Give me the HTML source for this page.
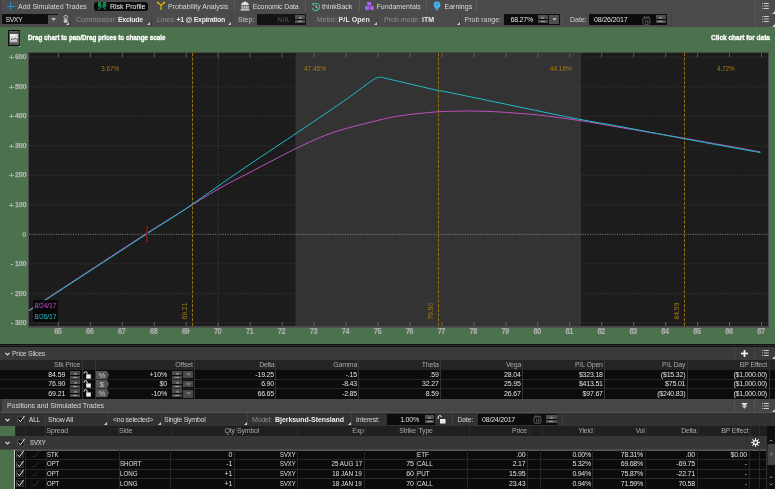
<!DOCTYPE html><html><head><meta charset="utf-8"><style>
html,body{margin:0;padding:0;width:775px;height:489px;overflow:hidden;background:#4b4b4b;}
body{position:relative;font-family:"Liberation Sans",sans-serif;}
div,span,svg{position:absolute;}
.t{white-space:nowrap;line-height:12px;height:12px;}
svg text{font-family:"Liberation Sans",sans-serif;}
</style></head><body><div id="root" style="left:0;top:0;width:775px;height:489px;will-change:transform">
<div style="left:0px;top:0px;width:775px;height:26.5px;background:#4b4b4b;"></div>
<div style="left:0px;top:0px;width:1px;height:26.5px;background:#404040;"></div>
<div style="left:1px;top:12px;width:774px;height:1px;background:#494949;"></div>
<div style="left:91.5px;top:0px;width:1.0px;height:12px;background:#5a5a5a;"></div>
<div style="left:234px;top:0px;width:1px;height:12px;background:#5a5a5a;"></div>
<div style="left:305px;top:0px;width:1px;height:12px;background:#5a5a5a;"></div>
<div style="left:359px;top:0px;width:1px;height:12px;background:#5a5a5a;"></div>
<div style="left:425.8px;top:0px;width:1.0px;height:12px;background:#5a5a5a;"></div>
<div style="left:476px;top:0px;width:1px;height:12px;background:#5a5a5a;"></div>
<div style="left:754.5px;top:0px;width:1.0px;height:26.5px;background:#575757;"></div>
<div style="left:6.8px;top:5.6px;width:8.0px;height:1.1000000000000005px;background:#2a8cc0;"></div>
<div style="left:10.2px;top:2.1px;width:1.1000000000000014px;height:8.1px;background:#2a8cc0;"></div>
<span class="t" style="left:18px;top:0.5999999999999996px;font-size:7px;color:#d8d8d8;font-weight:400;letter-spacing:0px;">Add Simulated Trades</span>
<div style="left:94px;top:2px;width:54px;height:8.5px;background:#0c0c0c;border-radius:2.5px"></div>
<svg style="left:96px;top:1px" width="12" height="10" viewBox="96 1 12 10"><rect x="98" y="2" width="3.1" height="4.9" fill="#0f8a48"/><rect x="103" y="2" width="3.2" height="4.9" fill="#0f8a48"/><path d="M100.6 6.6 L99.4 8.6 L98.3 9.5 M103.4 6.6 L104.6 8.6 L105.7 9.5" stroke="#0f8a48" stroke-width="1.1" fill="none"/><path d="M101.6 4.5 L101.8 6.6 L100.9 8.2 M102.6 4.5 L102.3 6.6 L103.1 8.2" stroke="#176060" stroke-width="0.8" fill="none"/></svg>
<span class="t" style="left:110px;top:0.5999999999999996px;font-size:7px;color:#f0f0f0;font-weight:400;letter-spacing:0px;">Risk Profile</span>
<svg style="left:155.5px;top:0px" width="10" height="11" viewBox="0 0 10 11"><path d="M1.8 2.6 L5 5.2 L8.2 2.6 M5 5.2 L5 10" stroke="#e0b800" stroke-width="1.2" fill="none"/><circle cx="1.8" cy="2.6" r="1" fill="#e0b800"/><circle cx="8.2" cy="2.6" r="1" fill="#e0b800"/></svg>
<span class="t" style="left:168px;top:0.5999999999999996px;font-size:7px;color:#d8d8d8;font-weight:400;letter-spacing:0px;">Probability Analysis</span>
<svg style="left:240px;top:0.5px" width="10" height="10" viewBox="0 0 10 10"><path d="M1.2 4 Q1.2 1 5 1 Q8.8 1 8.8 4 Z" fill="#e0e0e0"/><rect x="4.5" y="0" width="1" height="1.2" fill="#e0e0e0"/><rect x="1.5" y="4.6" width="1.2" height="3.2" fill="#e0e0e0"/><rect x="3.6" y="4.6" width="1.2" height="3.2" fill="#e0e0e0"/><rect x="5.6" y="4.6" width="1.2" height="3.2" fill="#e0e0e0"/><rect x="7.4" y="4.6" width="1.2" height="3.2" fill="#e0e0e0"/><rect x="0.6" y="8.2" width="8.8" height="1.3" fill="#e0e0e0"/></svg>
<span class="t" style="left:252.7px;top:0.5999999999999996px;font-size:7px;color:#d8d8d8;font-weight:400;letter-spacing:-0.12px;">Economic Data</span>
<svg style="left:310.5px;top:1.5px" width="10" height="10" viewBox="0 0 10 10"><path d="M1.3 5.8 A3.7 3.7 0 1 0 2.2 2.4" stroke="#3cc080" stroke-width="1.2" fill="none"/><path d="M0.2 1.6 L3.2 1.2 L2.6 4 Z" fill="#3cc080"/><path d="M5 2.8 L5 5.2 L6.6 6.2" stroke="#d0d0d0" stroke-width="0.9" fill="none"/></svg>
<span class="t" style="left:322px;top:0.5999999999999996px;font-size:7px;color:#d8d8d8;font-weight:400;letter-spacing:0px;">thinkBack</span>
<svg style="left:365px;top:2px" width="9" height="8" viewBox="0 0 9 8"><rect x="2.3" y="0" width="4" height="3.6" fill="#b060f0"/><rect x="0" y="4.2" width="4" height="3.6" fill="#b060f0"/><rect x="4.8" y="4.2" width="4" height="3.6" fill="#b060f0"/></svg>
<span class="t" style="left:376.5px;top:0.5999999999999996px;font-size:7px;color:#d8d8d8;font-weight:400;letter-spacing:0px;">Fundamentals</span>
<svg style="left:433px;top:0.8px" width="8" height="10" viewBox="0 0 8 10"><circle cx="4" cy="3.8" r="3.4" fill="#48b4ec"/><path d="M2.2 3.2 Q4 1.6 5.8 3.6 M2.4 4.6 L5.4 2.6" stroke="#2a7fb0" stroke-width="0.6" fill="none"/><rect x="2.7" y="6.8" width="2.6" height="1.6" fill="#48b4ec"/><rect x="3.1" y="8.6" width="1.8" height="0.9" fill="#48b4ec"/></svg>
<span class="t" style="left:444.5px;top:0.5999999999999996px;font-size:7px;color:#d8d8d8;font-weight:400;letter-spacing:0px;">Earnings</span>
<svg style="left:761.5px;top:3.2px" width="7" height="6" viewBox="0 0 7 6"><rect x="0" y="0" width="1" height="0.9" fill="#bbb"/><rect x="1.8" y="0" width="5" height="0.9" fill="#ddd"/><rect x="0" y="2.5" width="1" height="0.9" fill="#bbb"/><rect x="1.8" y="2.5" width="5" height="0.9" fill="#ccc"/><rect x="0" y="5" width="1" height="0.9" fill="#bbb"/><rect x="1.8" y="5" width="5" height="0.9" fill="#ddd"/></svg>
<svg style="left:761.5px;top:16.2px" width="7" height="6" viewBox="0 0 7 6"><rect x="0" y="0" width="1" height="0.9" fill="#bbb"/><rect x="1.8" y="0" width="5" height="0.9" fill="#ddd"/><rect x="0" y="2.5" width="1" height="0.9" fill="#bbb"/><rect x="1.8" y="2.5" width="5" height="0.9" fill="#ccc"/><rect x="0" y="5" width="1" height="0.9" fill="#bbb"/><rect x="1.8" y="5" width="5" height="0.9" fill="#ddd"/></svg>
<svg style="left:771.5px;top:10.5px" width="3" height="3" viewBox="0 0 3 3"><path d="M3 0 L3 3 L0 3 Z" fill="#ccc"/></svg>
<svg style="left:771.5px;top:23.5px" width="3" height="3" viewBox="0 0 3 3"><path d="M3 0 L3 3 L0 3 Z" fill="#ccc"/></svg>
<div style="left:2px;top:14.4px;width:56px;height:10.1px;background:#0f0f0f;"></div>
<span class="t" style="left:5.5px;top:13.5px;font-size:7px;color:#e0e0e0;font-weight:400;letter-spacing:-0.5px;">SVXY</span>
<div style="left:48px;top:15px;width:9.5px;height:9px;background:#4f4f4f;"></div>
<svg style="left:50.5px;top:18px" width="5" height="3" viewBox="0 0 5 3"><path d="M0 0 L5 0 L2.5 3 Z" fill="#bbb"/></svg>
<svg style="left:62.5px;top:14.5px" width="6" height="9" viewBox="0 0 6 9"><rect x="1" y="0.6" width="3.4" height="3.2" rx="1.2" stroke="#c8c8c8" stroke-width="1" fill="none"/><rect x="0.8" y="4.6" width="3.8" height="3.2" rx="1" fill="#c8c8c8"/><rect x="2.2" y="3.5" width="1" height="1.5" fill="#c8c8c8"/></svg>
<svg style="left:66px;top:22px" width="3" height="3" viewBox="0 0 3 3"><path d="M3 0 L3 3 L0 3 Z" fill="#ccc"/></svg>
<div style="left:70px;top:13px;width:1px;height:13.5px;background:#454545;"></div>
<span class="t" style="left:76px;top:13.600000000000001px;font-size:7px;color:#8f8f8f;font-weight:400;letter-spacing:0px;">Commission:</span>
<span class="t" style="left:118px;top:13.600000000000001px;font-size:7px;color:#e8e8e8;font-weight:700;letter-spacing:-0.3px;">Exclude</span>
<svg style="left:146.5px;top:22px" width="3" height="3" viewBox="0 0 3 3"><path d="M3 0 L3 3 L0 3 Z" fill="#ccc"/></svg>
<div style="left:150.8px;top:13px;width:1.0px;height:13.5px;background:#434343;"></div>
<span class="t" style="left:157px;top:13.600000000000001px;font-size:7px;color:#8f8f8f;font-weight:400;letter-spacing:0px;">Lines:</span>
<span class="t" style="left:176.5px;top:13.600000000000001px;font-size:7px;color:#e8e8e8;font-weight:700;letter-spacing:-0.3px;">+1 @ Expiration</span>
<svg style="left:228px;top:22px" width="3" height="3" viewBox="0 0 3 3"><path d="M3 0 L3 3 L0 3 Z" fill="#ccc"/></svg>
<div style="left:231.3px;top:13px;width:1.0px;height:13.5px;background:#434343;"></div>
<span class="t" style="left:238px;top:13.600000000000001px;font-size:7px;color:#c8c8c8;font-weight:400;letter-spacing:0px;">Step:</span>
<div style="left:256.5px;top:14px;width:49.5px;height:10.5px;background:#141414;"></div>
<span class="t" style="right:486px;top:13.600000000000001px;font-size:7px;color:#555;font-weight:400;letter-spacing:0px;">N/A</span>
<div style="left:295px;top:15px;width:10px;height:4px;background:#505050;"></div>
<div style="left:295px;top:20px;width:10px;height:3px;background:#505050;"></div>
<svg style="left:297.5px;top:15.6px" width="5" height="3" viewBox="0 0 5 3"><path d="M0.5 2.6 L2.5 0.4 L4.5 2.6 Z" fill="#9a9a9a"/></svg>
<div style="left:297.8px;top:21px;width:4.399999999999977px;height:1px;background:#9a9a9a;"></div>
<div style="left:310.4px;top:13px;width:1.0px;height:13.5px;background:#434343;"></div>
<span class="t" style="left:316.7px;top:13.600000000000001px;font-size:7px;color:#8f8f8f;font-weight:400;letter-spacing:0px;">Metric:</span>
<span class="t" style="right:405px;top:13.600000000000001px;font-size:7px;color:#e8e8e8;font-weight:700;letter-spacing:0.1px;">P/L Open</span>
<svg style="left:374px;top:22px" width="3" height="3" viewBox="0 0 3 3"><path d="M3 0 L3 3 L0 3 Z" fill="#ccc"/></svg>
<div style="left:377.4px;top:13px;width:1.0px;height:13.5px;background:#434343;"></div>
<span class="t" style="left:384px;top:13.600000000000001px;font-size:7px;color:#8f8f8f;font-weight:400;letter-spacing:0px;">Prob mode:</span>
<span class="t" style="right:341px;top:13.600000000000001px;font-size:7px;color:#e8e8e8;font-weight:700;letter-spacing:0px;">ITM</span>
<svg style="left:457px;top:22px" width="3" height="3" viewBox="0 0 3 3"><path d="M3 0 L3 3 L0 3 Z" fill="#ccc"/></svg>
<div style="left:459.7px;top:13px;width:1.0px;height:13.5px;background:#434343;"></div>
<span class="t" style="left:464.5px;top:13.600000000000001px;font-size:7px;color:#d0d0d0;font-weight:400;letter-spacing:0px;">Prob range:</span>
<div style="left:504px;top:14px;width:56px;height:10.5px;background:#0c0c0c;"></div>
<span class="t" style="right:242px;top:13.600000000000001px;font-size:7px;color:#e0e0e0;font-weight:400;letter-spacing:-0.2px;">68.27%</span>
<div style="left:538px;top:15px;width:9.600000000000023px;height:4px;background:#505050;"></div>
<div style="left:538px;top:20px;width:9.600000000000023px;height:3px;background:#505050;"></div>
<svg style="left:540.3px;top:15.6px" width="5" height="3" viewBox="0 0 5 3"><path d="M0.5 2.6 L2.5 0.4 L4.5 2.6 Z" fill="#9a9a9a"/></svg>
<div style="left:540.5999999999999px;top:21px;width:4.400000000000091px;height:1px;background:#9a9a9a;"></div>
<div style="left:548.6px;top:15px;width:10.399999999999977px;height:9px;background:#4e4e4e;"></div>
<svg style="left:551.8px;top:18.3px" width="5" height="3" viewBox="0 0 5 3"><path d="M0.3 0.2 L4.7 0.2 L2.5 2.6 Z" fill="#c8c8c8"/></svg>
<div style="left:565px;top:13px;width:1px;height:13.5px;background:#434343;"></div>
<span class="t" style="left:570px;top:13.600000000000001px;font-size:7px;color:#d0d0d0;font-weight:400;letter-spacing:0px;">Date:</span>
<div style="left:589px;top:14px;width:77.5px;height:10.5px;background:#0c0c0c;"></div>
<span class="t" style="left:594px;top:13.600000000000001px;font-size:7px;color:#e0e0e0;font-weight:400;letter-spacing:-0.15px;">08/26/2017</span>
<svg style="left:642px;top:15.5px" width="9" height="9" viewBox="0 0 9 9"><rect x="0.9" y="1.3" width="7" height="7" rx="1.5" stroke="#5a5a5a" stroke-width="1" fill="none"/><rect x="2.2" y="0.3" width="1" height="1.6" fill="#666"/><rect x="5.6" y="0.3" width="1" height="1.6" fill="#666"/><rect x="2" y="2.4" width="4.8" height="0.8" fill="#4a4a4a"/><rect x="3" y="4" width="0.9" height="3.2" fill="#555"/><rect x="4.8" y="4.2" width="1.6" height="3" fill="#555"/></svg>
<div style="left:655.6px;top:15px;width:10.100000000000023px;height:4px;background:#505050;"></div>
<div style="left:655.6px;top:20px;width:10.100000000000023px;height:3px;background:#505050;"></div>
<svg style="left:658.1500000000001px;top:15.6px" width="5" height="3" viewBox="0 0 5 3"><path d="M0.5 2.6 L2.5 0.4 L4.5 2.6 Z" fill="#9a9a9a"/></svg>
<div style="left:658.45px;top:21px;width:4.400000000000091px;height:1px;background:#9a9a9a;"></div>
<div style="left:671px;top:13px;width:1px;height:13.5px;background:#434343;"></div>
<div style="left:0px;top:26.5px;width:775px;height:317.5px;background:#4b714d;"></div>
<svg style="left:6px;top:28px" width="16" height="20" viewBox="6 28 16 20"><rect x="8" y="30" width="11.7" height="16" fill="#0e0e0e"/><rect x="9" y="31" width="9.8" height="14" fill="#5e5e5e"/><rect x="9.3" y="32" width="9.2" height="0.8" fill="#4a4a4a"/><rect x="9.3" y="43.4" width="9.2" height="0.8" fill="#4a4a4a"/><rect x="10" y="34" width="8.2" height="8.3" fill="#d8d8d8"/><rect x="10.3" y="34.3" width="5" height="2" fill="#f4f4f4"/><path d="M10.8 39.8 L12.5 38.8 L13.8 39.6 L15.2 38.4 L16.8 39.2" stroke="#3a3a3a" stroke-width="0.8" fill="none"/><rect x="17.4" y="38.5" width="0.8" height="3.5" fill="#333"/><rect x="10" y="41.2" width="8.2" height="0.6" fill="#999"/><rect x="19.2" y="46" width="1" height="1" fill="#ddd"/></svg>
<span class="t" style="left:28px;top:32.0px;font-size:6.3px;color:#ffffff;font-weight:700;letter-spacing:0px;-webkit-text-stroke:0.3px #fff">Drag chart to pan/Drag prices to change scale</span>
<span class="t" style="right:5px;top:32.3px;font-size:6.5px;color:#ffffff;font-weight:700;letter-spacing:0px;-webkit-text-stroke:0.3px #fff">Click chart for data</span>
<svg style="left:0;top:0" width="775" height="489" viewBox="0 0 775 489"><rect x="28" y="52" width="741" height="275.7" fill="#484848"/><rect x="29" y="53" width="739" height="273" fill="#1c1c1c"/><rect x="295.5" y="53" width="285.5" height="273" fill="#333333"/><line x1="29" y1="57.20" x2="768" y2="57.20" stroke="#3a3a3a" stroke-width="1" stroke-dasharray="1 1.45"/><line x1="29" y1="86.72" x2="768" y2="86.72" stroke="#3a3a3a" stroke-width="1" stroke-dasharray="1 1.45"/><line x1="29" y1="116.24" x2="768" y2="116.24" stroke="#3a3a3a" stroke-width="1" stroke-dasharray="1 1.45"/><line x1="29" y1="145.76" x2="768" y2="145.76" stroke="#3a3a3a" stroke-width="1" stroke-dasharray="1 1.45"/><line x1="29" y1="175.28" x2="768" y2="175.28" stroke="#3a3a3a" stroke-width="1" stroke-dasharray="1 1.45"/><line x1="29" y1="204.80" x2="768" y2="204.80" stroke="#3a3a3a" stroke-width="1" stroke-dasharray="1 1.45"/><line x1="29" y1="234.32" x2="768" y2="234.32" stroke="#8a8a8a" stroke-width="1" stroke-dasharray="1 1.45"/><line x1="29" y1="263.84" x2="768" y2="263.84" stroke="#3a3a3a" stroke-width="1" stroke-dasharray="1 1.45"/><line x1="29" y1="293.36" x2="768" y2="293.36" stroke="#3a3a3a" stroke-width="1" stroke-dasharray="1 1.45"/><line x1="29" y1="322.88" x2="768" y2="322.88" stroke="#3a3a3a" stroke-width="1" stroke-dasharray="1 1.45"/><line x1="218.20" y1="53" x2="218.20" y2="326" stroke="#404040" stroke-width="1" stroke-dasharray="1 1.45"/><line x1="537.80" y1="53" x2="537.80" y2="326" stroke="#404040" stroke-width="1" stroke-dasharray="1 1.45"/><line x1="58.40" y1="53" x2="58.40" y2="57.5" stroke="#5c5c5c" stroke-width="1"/><line x1="58.40" y1="322.3" x2="58.40" y2="326" stroke="#666" stroke-width="1"/><line x1="90.36" y1="53" x2="90.36" y2="57.5" stroke="#5c5c5c" stroke-width="1"/><line x1="90.36" y1="322.3" x2="90.36" y2="326" stroke="#666" stroke-width="1"/><line x1="122.32" y1="53" x2="122.32" y2="57.5" stroke="#5c5c5c" stroke-width="1"/><line x1="122.32" y1="322.3" x2="122.32" y2="326" stroke="#666" stroke-width="1"/><line x1="154.28" y1="53" x2="154.28" y2="57.5" stroke="#5c5c5c" stroke-width="1"/><line x1="154.28" y1="322.3" x2="154.28" y2="326" stroke="#666" stroke-width="1"/><line x1="186.24" y1="53" x2="186.24" y2="57.5" stroke="#5c5c5c" stroke-width="1"/><line x1="186.24" y1="322.3" x2="186.24" y2="326" stroke="#666" stroke-width="1"/><line x1="218.20" y1="53" x2="218.20" y2="57.5" stroke="#5c5c5c" stroke-width="1"/><line x1="218.20" y1="322.3" x2="218.20" y2="326" stroke="#666" stroke-width="1"/><line x1="250.16" y1="53" x2="250.16" y2="57.5" stroke="#5c5c5c" stroke-width="1"/><line x1="250.16" y1="322.3" x2="250.16" y2="326" stroke="#666" stroke-width="1"/><line x1="282.12" y1="53" x2="282.12" y2="57.5" stroke="#5c5c5c" stroke-width="1"/><line x1="282.12" y1="322.3" x2="282.12" y2="326" stroke="#666" stroke-width="1"/><line x1="314.08" y1="53" x2="314.08" y2="57.5" stroke="#5c5c5c" stroke-width="1"/><line x1="314.08" y1="322.3" x2="314.08" y2="326" stroke="#666" stroke-width="1"/><line x1="346.04" y1="53" x2="346.04" y2="57.5" stroke="#5c5c5c" stroke-width="1"/><line x1="346.04" y1="322.3" x2="346.04" y2="326" stroke="#666" stroke-width="1"/><line x1="378.00" y1="53" x2="378.00" y2="57.5" stroke="#5c5c5c" stroke-width="1"/><line x1="378.00" y1="322.3" x2="378.00" y2="326" stroke="#666" stroke-width="1"/><line x1="409.96" y1="53" x2="409.96" y2="57.5" stroke="#5c5c5c" stroke-width="1"/><line x1="409.96" y1="322.3" x2="409.96" y2="326" stroke="#666" stroke-width="1"/><line x1="441.92" y1="53" x2="441.92" y2="57.5" stroke="#5c5c5c" stroke-width="1"/><line x1="441.92" y1="322.3" x2="441.92" y2="326" stroke="#666" stroke-width="1"/><line x1="473.88" y1="53" x2="473.88" y2="57.5" stroke="#5c5c5c" stroke-width="1"/><line x1="473.88" y1="322.3" x2="473.88" y2="326" stroke="#666" stroke-width="1"/><line x1="505.84" y1="53" x2="505.84" y2="57.5" stroke="#5c5c5c" stroke-width="1"/><line x1="505.84" y1="322.3" x2="505.84" y2="326" stroke="#666" stroke-width="1"/><line x1="537.80" y1="53" x2="537.80" y2="57.5" stroke="#5c5c5c" stroke-width="1"/><line x1="537.80" y1="322.3" x2="537.80" y2="326" stroke="#666" stroke-width="1"/><line x1="569.76" y1="53" x2="569.76" y2="57.5" stroke="#5c5c5c" stroke-width="1"/><line x1="569.76" y1="322.3" x2="569.76" y2="326" stroke="#666" stroke-width="1"/><line x1="601.72" y1="53" x2="601.72" y2="57.5" stroke="#5c5c5c" stroke-width="1"/><line x1="601.72" y1="322.3" x2="601.72" y2="326" stroke="#666" stroke-width="1"/><line x1="633.68" y1="53" x2="633.68" y2="57.5" stroke="#5c5c5c" stroke-width="1"/><line x1="633.68" y1="322.3" x2="633.68" y2="326" stroke="#666" stroke-width="1"/><line x1="665.64" y1="53" x2="665.64" y2="57.5" stroke="#5c5c5c" stroke-width="1"/><line x1="665.64" y1="322.3" x2="665.64" y2="326" stroke="#666" stroke-width="1"/><line x1="697.60" y1="53" x2="697.60" y2="57.5" stroke="#5c5c5c" stroke-width="1"/><line x1="697.60" y1="322.3" x2="697.60" y2="326" stroke="#666" stroke-width="1"/><line x1="729.56" y1="53" x2="729.56" y2="57.5" stroke="#5c5c5c" stroke-width="1"/><line x1="729.56" y1="322.3" x2="729.56" y2="326" stroke="#666" stroke-width="1"/><line x1="761.52" y1="53" x2="761.52" y2="57.5" stroke="#5c5c5c" stroke-width="1"/><line x1="761.52" y1="322.3" x2="761.52" y2="326" stroke="#666" stroke-width="1"/><line x1="192.50" y1="53" x2="192.50" y2="326" stroke="#94700f" stroke-width="1" stroke-dasharray="3.2 1.45"/><text x="0" y="0" transform="translate(184.90,311.1) rotate(-90)" text-anchor="middle" dominant-baseline="central" font-family="Liberation Sans" font-size="6.8" fill="#a07a1c">69.21</text><line x1="438.50" y1="53" x2="438.50" y2="326" stroke="#94700f" stroke-width="1" stroke-dasharray="3.2 1.45"/><text x="0" y="0" transform="translate(430.90,311.1) rotate(-90)" text-anchor="middle" dominant-baseline="central" font-family="Liberation Sans" font-size="6.8" fill="#a07a1c">76.90</text><line x1="684.50" y1="53" x2="684.50" y2="326" stroke="#94700f" stroke-width="1" stroke-dasharray="3.2 1.45"/><text x="0" y="0" transform="translate(676.90,311.1) rotate(-90)" text-anchor="middle" dominant-baseline="central" font-family="Liberation Sans" font-size="6.8" fill="#a07a1c">84.59</text><text x="101.30" y="68.0" dominant-baseline="central" font-family="Liberation Sans" font-size="7.8" textLength="17.8" lengthAdjust="spacingAndGlyphs" fill="#aa7a12">3.67%</text><text x="304.00" y="68.0" dominant-baseline="central" font-family="Liberation Sans" font-size="7.8" textLength="22" lengthAdjust="spacingAndGlyphs" fill="#aa7a12">47.45%</text><text x="549.80" y="68.0" dominant-baseline="central" font-family="Liberation Sans" font-size="7.8" textLength="22" lengthAdjust="spacingAndGlyphs" fill="#aa7a12">44.16%</text><text x="716.90" y="68.0" dominant-baseline="central" font-family="Liberation Sans" font-size="7.8" textLength="17.8" lengthAdjust="spacingAndGlyphs" fill="#aa7a12">4.72%</text><path d="M29.00 310.20 C38.83 303.77 68.33 284.45 88.00 271.60 C107.67 258.75 131.33 243.15 147.00 233.10 C162.67 223.05 170.17 218.62 182.00 211.30 C193.83 203.98 206.67 195.70 218.00 189.20 C229.33 182.70 236.33 179.40 250.00 172.30 C263.67 165.20 285.83 153.33 300.00 146.60 C314.17 139.87 321.67 136.35 335.00 131.90 C348.33 127.45 369.17 122.58 380.00 119.90 C390.83 117.22 393.33 116.88 400.00 115.80 C406.67 114.72 413.60 114.07 420.00 113.40 C426.40 112.73 430.90 112.20 438.40 111.80 C445.90 111.40 456.40 111.05 465.00 111.00 C473.60 110.95 482.50 111.22 490.00 111.50 C497.50 111.78 501.67 112.08 510.00 112.70 C518.33 113.32 528.33 113.88 540.00 115.20 C551.67 116.52 566.67 118.57 580.00 120.60 C593.33 122.63 602.57 124.45 620.00 127.40 C637.43 130.35 661.20 134.22 684.60 138.30 C708.00 142.38 747.77 149.63 760.40 151.90" stroke="#be50be" stroke-width="1" fill="none"/><path d="M29.00 310.90 C38.83 304.47 68.33 285.15 88.00 272.30 C107.67 259.45 131.33 243.97 147.00 233.80 C162.67 223.63 170.17 219.23 182.00 211.30 C193.83 203.37 206.67 194.05 218.00 186.20 C229.33 178.35 236.33 173.43 250.00 164.20 C263.67 154.97 284.43 141.28 300.00 130.80 C315.57 120.32 332.73 108.70 343.40 101.30 C354.07 93.90 359.02 90.02 364.00 86.40 C368.98 82.78 370.60 81.13 373.30 79.60 C376.00 78.07 377.95 77.37 380.20 77.20 C382.45 77.03 381.23 77.33 386.80 78.60 C392.37 79.87 405.00 82.80 413.60 84.80 C422.20 86.80 432.33 89.30 438.40 90.60 C444.47 91.90 433.07 89.15 450.00 92.60 C466.93 96.05 518.33 106.83 540.00 111.30 C561.67 115.77 566.67 116.87 580.00 119.40 C593.33 121.93 602.57 123.27 620.00 126.50 C637.43 129.73 661.20 134.45 684.60 138.80 C708.00 143.15 747.77 150.30 760.40 152.60" stroke="#1ebec8" stroke-width="1" fill="none"/><rect x="146.2" y="225.8" width="1.6" height="16.4" fill="#7e1a1a"/><rect x="33" y="300" width="25" height="22" fill="#050505" fill-opacity="0.85"/><text x="34.5" y="305.7" dominant-baseline="central" font-family="Liberation Sans" font-size="7" fill="#be50be" letter-spacing="-0.2">8/24/17</text><text x="34.5" y="316.2" dominant-baseline="central" font-family="Liberation Sans" font-size="7" fill="#1ebec8" letter-spacing="-0.2">8/26/17</text></svg>
<span class="t" style="right:748.7px;top:51.400000000000006px;font-size:7.2px;color:#b4b4b4;font-weight:700;letter-spacing:-0.25px;-webkit-text-stroke:0.25px #b4b4b4">600</span>
<div style="left:9.2px;top:57.0px;width:4.800000000000001px;height:0.8000000000000043px;background:#a8a8a8;"></div>
<div style="left:11.2px;top:55.400000000000006px;width:0.8000000000000007px;height:4.0px;background:#a8a8a8;"></div>
<span class="t" style="right:748.7px;top:80.92px;font-size:7.2px;color:#b4b4b4;font-weight:700;letter-spacing:-0.25px;-webkit-text-stroke:0.25px #b4b4b4">500</span>
<div style="left:9.2px;top:86.52px;width:4.800000000000001px;height:0.7999999999999972px;background:#a8a8a8;"></div>
<div style="left:11.2px;top:84.92px;width:0.8000000000000007px;height:4.0px;background:#a8a8a8;"></div>
<span class="t" style="right:748.7px;top:110.44000000000001px;font-size:7.2px;color:#b4b4b4;font-weight:700;letter-spacing:-0.25px;-webkit-text-stroke:0.25px #b4b4b4">400</span>
<div style="left:9.2px;top:116.04px;width:4.800000000000001px;height:0.7999999999999972px;background:#a8a8a8;"></div>
<div style="left:11.2px;top:114.44000000000001px;width:0.8000000000000007px;height:4.0px;background:#a8a8a8;"></div>
<span class="t" style="right:748.7px;top:139.95999999999998px;font-size:7.2px;color:#b4b4b4;font-weight:700;letter-spacing:-0.25px;-webkit-text-stroke:0.25px #b4b4b4">300</span>
<div style="left:9.2px;top:145.56px;width:4.800000000000001px;height:0.799999999999983px;background:#a8a8a8;"></div>
<div style="left:11.2px;top:143.95999999999998px;width:0.8000000000000007px;height:4.0px;background:#a8a8a8;"></div>
<span class="t" style="right:748.7px;top:169.48000000000002px;font-size:7.2px;color:#b4b4b4;font-weight:700;letter-spacing:-0.25px;-webkit-text-stroke:0.25px #b4b4b4">200</span>
<div style="left:9.2px;top:175.08000000000004px;width:4.800000000000001px;height:0.799999999999983px;background:#a8a8a8;"></div>
<div style="left:11.2px;top:173.48000000000002px;width:0.8000000000000007px;height:4.0px;background:#a8a8a8;"></div>
<span class="t" style="right:748.7px;top:199.0px;font-size:7.2px;color:#b4b4b4;font-weight:700;letter-spacing:-0.25px;-webkit-text-stroke:0.25px #b4b4b4">100</span>
<div style="left:9.2px;top:204.60000000000002px;width:4.800000000000001px;height:0.799999999999983px;background:#a8a8a8;"></div>
<div style="left:11.2px;top:203.0px;width:0.8000000000000007px;height:4.0px;background:#a8a8a8;"></div>
<span class="t" style="right:748.7px;top:228.51999999999998px;font-size:7.2px;color:#b4b4b4;font-weight:700;letter-spacing:0px;">0</span>
<span class="t" style="right:748.7px;top:258.04px;font-size:7.2px;color:#b4b4b4;font-weight:700;letter-spacing:-0.25px;-webkit-text-stroke:0.25px #b4b4b4">100</span>
<div style="left:11px;top:263.54px;width:2.1999999999999993px;height:1.0px;background:#b8b8b8;"></div>
<span class="t" style="right:748.7px;top:287.56px;font-size:7.2px;color:#b4b4b4;font-weight:700;letter-spacing:-0.25px;-webkit-text-stroke:0.25px #b4b4b4">200</span>
<div style="left:11px;top:293.06px;width:2.1999999999999993px;height:1.0px;background:#b8b8b8;"></div>
<span class="t" style="right:748.7px;top:317.08px;font-size:7.2px;color:#b4b4b4;font-weight:700;letter-spacing:-0.25px;-webkit-text-stroke:0.25px #b4b4b4">300</span>
<div style="left:11px;top:322.58px;width:2.1999999999999993px;height:1.0px;background:#b8b8b8;"></div>
<span class="t" style="left:-42.2px;width:200px;text-align:center;top:326.4px;font-size:7.4px;color:#acacac;font-weight:700;letter-spacing:-0.45px;transform:scaleY(1.12);-webkit-text-stroke:0.2px #acacac">65</span>
<span class="t" style="left:-10.239999999999995px;width:200px;text-align:center;top:326.4px;font-size:7.4px;color:#acacac;font-weight:700;letter-spacing:-0.45px;transform:scaleY(1.12);-webkit-text-stroke:0.2px #acacac">66</span>
<span class="t" style="left:21.72px;width:200px;text-align:center;top:326.4px;font-size:7.4px;color:#acacac;font-weight:700;letter-spacing:-0.45px;transform:scaleY(1.12);-webkit-text-stroke:0.2px #acacac">67</span>
<span class="t" style="left:53.68000000000001px;width:200px;text-align:center;top:326.4px;font-size:7.4px;color:#acacac;font-weight:700;letter-spacing:-0.45px;transform:scaleY(1.12);-webkit-text-stroke:0.2px #acacac">68</span>
<span class="t" style="left:85.64000000000001px;width:200px;text-align:center;top:326.4px;font-size:7.4px;color:#acacac;font-weight:700;letter-spacing:-0.45px;transform:scaleY(1.12);-webkit-text-stroke:0.2px #acacac">69</span>
<span class="t" style="left:117.60000000000002px;width:200px;text-align:center;top:326.4px;font-size:7.4px;color:#acacac;font-weight:700;letter-spacing:-0.45px;transform:scaleY(1.12);-webkit-text-stroke:0.2px #acacac">70</span>
<span class="t" style="left:149.56px;width:200px;text-align:center;top:326.4px;font-size:7.4px;color:#acacac;font-weight:700;letter-spacing:-0.45px;transform:scaleY(1.12);-webkit-text-stroke:0.2px #acacac">71</span>
<span class="t" style="left:181.51999999999998px;width:200px;text-align:center;top:326.4px;font-size:7.4px;color:#acacac;font-weight:700;letter-spacing:-0.45px;transform:scaleY(1.12);-webkit-text-stroke:0.2px #acacac">72</span>
<span class="t" style="left:213.47999999999996px;width:200px;text-align:center;top:326.4px;font-size:7.4px;color:#acacac;font-weight:700;letter-spacing:-0.45px;transform:scaleY(1.12);-webkit-text-stroke:0.2px #acacac">73</span>
<span class="t" style="left:245.43999999999994px;width:200px;text-align:center;top:326.4px;font-size:7.4px;color:#acacac;font-weight:700;letter-spacing:-0.45px;transform:scaleY(1.12);-webkit-text-stroke:0.2px #acacac">74</span>
<span class="t" style="left:277.4px;width:200px;text-align:center;top:326.4px;font-size:7.4px;color:#acacac;font-weight:700;letter-spacing:-0.45px;transform:scaleY(1.12);-webkit-text-stroke:0.2px #acacac">75</span>
<span class="t" style="left:309.35999999999996px;width:200px;text-align:center;top:326.4px;font-size:7.4px;color:#acacac;font-weight:700;letter-spacing:-0.45px;transform:scaleY(1.12);-webkit-text-stroke:0.2px #acacac">76</span>
<span class="t" style="left:341.31999999999994px;width:200px;text-align:center;top:326.4px;font-size:7.4px;color:#acacac;font-weight:700;letter-spacing:-0.45px;transform:scaleY(1.12);-webkit-text-stroke:0.2px #acacac">77</span>
<span class="t" style="left:373.28px;width:200px;text-align:center;top:326.4px;font-size:7.4px;color:#acacac;font-weight:700;letter-spacing:-0.45px;transform:scaleY(1.12);-webkit-text-stroke:0.2px #acacac">78</span>
<span class="t" style="left:405.23999999999995px;width:200px;text-align:center;top:326.4px;font-size:7.4px;color:#acacac;font-weight:700;letter-spacing:-0.45px;transform:scaleY(1.12);-webkit-text-stroke:0.2px #acacac">79</span>
<span class="t" style="left:437.20000000000005px;width:200px;text-align:center;top:326.4px;font-size:7.4px;color:#acacac;font-weight:700;letter-spacing:-0.45px;transform:scaleY(1.12);-webkit-text-stroke:0.2px #acacac">80</span>
<span class="t" style="left:469.15999999999997px;width:200px;text-align:center;top:326.4px;font-size:7.4px;color:#acacac;font-weight:700;letter-spacing:-0.45px;transform:scaleY(1.12);-webkit-text-stroke:0.2px #acacac">81</span>
<span class="t" style="left:501.12px;width:200px;text-align:center;top:326.4px;font-size:7.4px;color:#acacac;font-weight:700;letter-spacing:-0.45px;transform:scaleY(1.12);-webkit-text-stroke:0.2px #acacac">82</span>
<span class="t" style="left:533.0799999999999px;width:200px;text-align:center;top:326.4px;font-size:7.4px;color:#acacac;font-weight:700;letter-spacing:-0.45px;transform:scaleY(1.12);-webkit-text-stroke:0.2px #acacac">83</span>
<span class="t" style="left:565.04px;width:200px;text-align:center;top:326.4px;font-size:7.4px;color:#acacac;font-weight:700;letter-spacing:-0.45px;transform:scaleY(1.12);-webkit-text-stroke:0.2px #acacac">84</span>
<span class="t" style="left:597.0px;width:200px;text-align:center;top:326.4px;font-size:7.4px;color:#acacac;font-weight:700;letter-spacing:-0.45px;transform:scaleY(1.12);-webkit-text-stroke:0.2px #acacac">85</span>
<span class="t" style="left:628.9599999999999px;width:200px;text-align:center;top:326.4px;font-size:7.4px;color:#acacac;font-weight:700;letter-spacing:-0.45px;transform:scaleY(1.12);-webkit-text-stroke:0.2px #acacac">86</span>
<span class="t" style="left:660.92px;width:200px;text-align:center;top:326.4px;font-size:7.4px;color:#acacac;font-weight:700;letter-spacing:-0.45px;transform:scaleY(1.12);-webkit-text-stroke:0.2px #acacac">87</span>
<div style="left:0px;top:344px;width:775px;height:3px;background:#121212;"></div>
<div style="left:0px;top:345px;width:775px;height:1px;background:#2a2a2a;"></div>
<div style="left:0px;top:347px;width:775px;height:12.699999999999989px;background:#3a3a3a;"></div>
<svg style="left:4.5px;top:351.5px" width="5" height="4" viewBox="0 0 5 4"><path d="M0.5 0.8 L2.5 2.8 L4.5 0.8" stroke="#ddd" stroke-width="1.2" fill="none"/></svg>
<span class="t" style="left:12px;top:348.0px;font-size:7px;color:#d0d0d0;font-weight:400;letter-spacing:-0.3px;">Price Slices</span>
<div style="left:733.6px;top:347px;width:1.0px;height:12.699999999999989px;background:#444444;"></div>
<div style="left:754px;top:347px;width:1px;height:12.699999999999989px;background:#444444;"></div>
<svg style="left:740.5px;top:349.5px" width="7" height="7" viewBox="0 0 7 7"><rect x="2.6" y="0" width="1.8" height="7" fill="#f0f0f0"/><rect x="0" y="2.6" width="7" height="1.8" fill="#f0f0f0"/></svg>
<svg style="left:761.5px;top:350.2px" width="7" height="6" viewBox="0 0 7 6"><rect x="0" y="0" width="1" height="0.9" fill="#bbb"/><rect x="1.8" y="0" width="5" height="0.9" fill="#ddd"/><rect x="0" y="2.5" width="1" height="0.9" fill="#bbb"/><rect x="1.8" y="2.5" width="5" height="0.9" fill="#ccc"/><rect x="0" y="5" width="1" height="0.9" fill="#bbb"/><rect x="1.8" y="5" width="5" height="0.9" fill="#ddd"/></svg>
<svg style="left:771.5px;top:356px" width="3" height="3" viewBox="0 0 3 3"><path d="M3 0 L3 3 L0 3 Z" fill="#ccc"/></svg>
<div style="left:0px;top:359.7px;width:775px;height:10.300000000000011px;background:#242424;"></div>
<div style="left:0px;top:370px;width:775px;height:9.300000000000011px;background:#0c0c0c;"></div>
<div style="left:0px;top:379.8px;width:775px;height:8.5px;background:#0c0c0c;"></div>
<div style="left:0px;top:388.8px;width:775px;height:9.899999999999977px;background:#0c0c0c;"></div>
<div style="left:0px;top:379.3px;width:775px;height:0.5px;background:#262626;"></div>
<div style="left:0px;top:388.3px;width:775px;height:0.5px;background:#262626;"></div>
<div style="left:81.8px;top:359.7px;width:1.0px;height:39.0px;background:#333333;"></div>
<div style="left:94.8px;top:359.7px;width:1.0px;height:39.0px;background:#333333;"></div>
<div style="left:193.8px;top:359.7px;width:1.0px;height:39.0px;background:#333333;"></div>
<div style="left:275.1px;top:359.7px;width:1.0px;height:39.0px;background:#333333;"></div>
<div style="left:358.4px;top:359.7px;width:1.0px;height:39.0px;background:#333333;"></div>
<div style="left:440.2px;top:359.7px;width:1.0px;height:39.0px;background:#333333;"></div>
<div style="left:522.3px;top:359.7px;width:1.0px;height:39.0px;background:#333333;"></div>
<div style="left:604.1px;top:359.7px;width:1.0px;height:39.0px;background:#333333;"></div>
<div style="left:686.8px;top:359.7px;width:1.0px;height:39.0px;background:#333333;"></div>
<div style="left:768.5px;top:359.7px;width:1.0px;height:39.0px;background:#333333;"></div>
<span class="t" style="right:694.8px;top:359.0px;font-size:7px;color:#a8a8a8;font-weight:400;letter-spacing:-0.2px;">Stk Price</span>
<span class="t" style="right:582.3px;top:359.0px;font-size:7px;color:#a8a8a8;font-weight:400;letter-spacing:-0.2px;">Offset</span>
<span class="t" style="right:500.5px;top:359.0px;font-size:7px;color:#a8a8a8;font-weight:400;letter-spacing:-0.2px;">Delta</span>
<span class="t" style="right:417.8px;top:359.0px;font-size:7px;color:#a8a8a8;font-weight:400;letter-spacing:-0.2px;">Gamma</span>
<span class="t" style="right:336.4px;top:359.0px;font-size:7px;color:#a8a8a8;font-weight:400;letter-spacing:-0.2px;">Theta</span>
<span class="t" style="right:253.89999999999998px;top:359.0px;font-size:7px;color:#a8a8a8;font-weight:400;letter-spacing:-0.2px;">Vega</span>
<span class="t" style="right:172.20000000000005px;top:359.0px;font-size:7px;color:#a8a8a8;font-weight:400;letter-spacing:-0.2px;">P/L Open</span>
<span class="t" style="right:89.70000000000005px;top:359.0px;font-size:7px;color:#a8a8a8;font-weight:400;letter-spacing:-0.2px;">P/L Day</span>
<span class="t" style="right:8px;top:359.0px;font-size:7px;color:#a8a8a8;font-weight:400;letter-spacing:-0.2px;">BP Effect</span>
<span class="t" style="right:709.7px;top:368.65px;font-size:7px;color:#e0e0e0;font-weight:400;letter-spacing:-0.1px;">84.59</span>
<div style="left:70.3px;top:371px;width:9.700000000000003px;height:4px;background:#4a4a4a;"></div>
<div style="left:70.3px;top:376px;width:9.700000000000003px;height:3px;background:#4a4a4a;"></div>
<svg style="left:72.65px;top:371.6px" width="5" height="3" viewBox="0 0 5 3"><path d="M0.5 2.6 L2.5 0.4 L4.5 2.6 Z" fill="#999"/></svg>
<div style="left:72.95px;top:377px;width:4.400000000000006px;height:1px;background:#999;"></div>
<svg style="left:82.5px;top:370.5px" width="8" height="9" viewBox="0 0 8 9"><path d="M1 2.6 Q1 0.6 2.6 0.6 Q4.2 0.6 4.2 2.6 L4.2 3.4" stroke="#eee" stroke-width="1" fill="none"/><rect x="3.2" y="3.4" width="4.6" height="4.2" fill="#eee"/></svg>
<svg style="left:96px;top:370.6px" width="14" height="8.2" viewBox="0 0 14 8.2"><path d="M0 0 L11 0 L13 4.1 L11 8.2 L0 8.2 Z" fill="#555"/><text x="5.8" y="4.3" text-anchor="middle" dominant-baseline="central" font-family="Liberation Sans" font-size="7.5" fill="#ccc">%</text></svg>
<span class="t" style="right:607.9px;top:368.65px;font-size:7px;color:#e0e0e0;font-weight:400;letter-spacing:-0.1px;">+10%</span>
<div style="left:172px;top:371px;width:10px;height:4px;background:#4a4a4a;"></div>
<div style="left:172px;top:376px;width:10px;height:3px;background:#4a4a4a;"></div>
<svg style="left:174.5px;top:371.6px" width="5" height="3" viewBox="0 0 5 3"><path d="M0.5 2.6 L2.5 0.4 L4.5 2.6 Z" fill="#999"/></svg>
<div style="left:174.8px;top:377px;width:4.399999999999977px;height:1px;background:#999;"></div>
<div style="left:183px;top:370.8px;width:9.699999999999989px;height:7.699999999999989px;background:#4a4a4a;"></div>
<svg style="left:185.5px;top:373.15px" width="5" height="3" viewBox="0 0 5 3"><path d="M0 0 L5 0 L2.5 3 Z" fill="#777"/></svg>
<span class="t" style="right:501px;top:368.65px;font-size:7px;color:#e0e0e0;font-weight:400;letter-spacing:-0.2px;">-19.25</span>
<span class="t" style="right:418px;top:368.65px;font-size:7px;color:#e0e0e0;font-weight:400;letter-spacing:-0.2px;">-.15</span>
<span class="t" style="right:336.4px;top:368.65px;font-size:7px;color:#e0e0e0;font-weight:400;letter-spacing:-0.2px;">.59</span>
<span class="t" style="right:254.39999999999998px;top:368.65px;font-size:7px;color:#e0e0e0;font-weight:400;letter-spacing:-0.2px;">28.04</span>
<span class="t" style="right:172.20000000000005px;top:368.65px;font-size:7px;color:#e0e0e0;font-weight:400;letter-spacing:-0.2px;">$323.18</span>
<span class="t" style="right:89.70000000000005px;top:368.65px;font-size:7px;color:#e0e0e0;font-weight:400;letter-spacing:-0.2px;">($15.32)</span>
<span class="t" style="right:8px;top:368.65px;font-size:7px;color:#e0e0e0;font-weight:400;letter-spacing:-0.2px;">($1,000.00)</span>
<span class="t" style="right:709.7px;top:378.05px;font-size:7px;color:#e0e0e0;font-weight:400;letter-spacing:-0.1px;">76.90</span>
<div style="left:70.3px;top:380px;width:9.700000000000003px;height:4px;background:#4a4a4a;"></div>
<div style="left:70.3px;top:385px;width:9.700000000000003px;height:3px;background:#4a4a4a;"></div>
<svg style="left:72.65px;top:380.6px" width="5" height="3" viewBox="0 0 5 3"><path d="M0.5 2.6 L2.5 0.4 L4.5 2.6 Z" fill="#999"/></svg>
<div style="left:72.95px;top:386px;width:4.400000000000006px;height:1px;background:#999;"></div>
<svg style="left:82.5px;top:380.3px" width="8" height="9" viewBox="0 0 8 9"><path d="M1 2.6 Q1 0.6 2.6 0.6 Q4.2 0.6 4.2 2.6 L4.2 3.4" stroke="#eee" stroke-width="1" fill="none"/><rect x="3.2" y="3.4" width="4.6" height="4.2" fill="#eee"/></svg>
<svg style="left:96px;top:380.40000000000003px" width="14" height="8.2" viewBox="0 0 14 8.2"><path d="M0 0 L11 0 L13 4.1 L11 8.2 L0 8.2 Z" fill="#555"/><text x="5.8" y="4.3" text-anchor="middle" dominant-baseline="central" font-family="Liberation Sans" font-size="7.5" fill="#ccc">$</text></svg>
<span class="t" style="right:607.9px;top:378.05px;font-size:7px;color:#e0e0e0;font-weight:400;letter-spacing:-0.1px;">$0</span>
<div style="left:172px;top:380px;width:10px;height:4px;background:#4a4a4a;"></div>
<div style="left:172px;top:385px;width:10px;height:3px;background:#4a4a4a;"></div>
<svg style="left:174.5px;top:380.6px" width="5" height="3" viewBox="0 0 5 3"><path d="M0.5 2.6 L2.5 0.4 L4.5 2.6 Z" fill="#999"/></svg>
<div style="left:174.8px;top:386px;width:4.399999999999977px;height:1px;background:#999;"></div>
<div style="left:183px;top:380.6px;width:9.699999999999989px;height:6.899999999999977px;background:#4a4a4a;"></div>
<svg style="left:185.5px;top:382.55px" width="5" height="3" viewBox="0 0 5 3"><path d="M0 0 L5 0 L2.5 3 Z" fill="#777"/></svg>
<span class="t" style="right:501px;top:378.05px;font-size:7px;color:#e0e0e0;font-weight:400;letter-spacing:-0.2px;">6.90</span>
<span class="t" style="right:418px;top:378.05px;font-size:7px;color:#e0e0e0;font-weight:400;letter-spacing:-0.2px;">-8.43</span>
<span class="t" style="right:336.4px;top:378.05px;font-size:7px;color:#e0e0e0;font-weight:400;letter-spacing:-0.2px;">32.27</span>
<span class="t" style="right:254.39999999999998px;top:378.05px;font-size:7px;color:#e0e0e0;font-weight:400;letter-spacing:-0.2px;">25.95</span>
<span class="t" style="right:172.20000000000005px;top:378.05px;font-size:7px;color:#e0e0e0;font-weight:400;letter-spacing:-0.2px;">$413.51</span>
<span class="t" style="right:89.70000000000005px;top:378.05px;font-size:7px;color:#e0e0e0;font-weight:400;letter-spacing:-0.2px;">$75.01</span>
<span class="t" style="right:8px;top:378.05px;font-size:7px;color:#e0e0e0;font-weight:400;letter-spacing:-0.2px;">($1,000.00)</span>
<span class="t" style="right:709.7px;top:387.75px;font-size:7px;color:#e0e0e0;font-weight:400;letter-spacing:-0.1px;">69.21</span>
<div style="left:70.3px;top:389px;width:9.700000000000003px;height:4px;background:#4a4a4a;"></div>
<div style="left:70.3px;top:394px;width:9.700000000000003px;height:3px;background:#4a4a4a;"></div>
<svg style="left:72.65px;top:389.6px" width="5" height="3" viewBox="0 0 5 3"><path d="M0.5 2.6 L2.5 0.4 L4.5 2.6 Z" fill="#999"/></svg>
<div style="left:72.95px;top:395px;width:4.400000000000006px;height:1px;background:#999;"></div>
<svg style="left:82.5px;top:389.3px" width="8" height="9" viewBox="0 0 8 9"><path d="M1 2.6 Q1 0.6 2.6 0.6 Q4.2 0.6 4.2 2.6 L4.2 3.4" stroke="#eee" stroke-width="1" fill="none"/><rect x="3.2" y="3.4" width="4.6" height="4.2" fill="#eee"/></svg>
<svg style="left:96px;top:389.40000000000003px" width="14" height="8.2" viewBox="0 0 14 8.2"><path d="M0 0 L11 0 L13 4.1 L11 8.2 L0 8.2 Z" fill="#555"/><text x="5.8" y="4.3" text-anchor="middle" dominant-baseline="central" font-family="Liberation Sans" font-size="7.5" fill="#ccc">%</text></svg>
<span class="t" style="right:607.9px;top:387.75px;font-size:7px;color:#e0e0e0;font-weight:400;letter-spacing:-0.1px;">-10%</span>
<div style="left:172px;top:389px;width:10px;height:4px;background:#4a4a4a;"></div>
<div style="left:172px;top:394px;width:10px;height:3px;background:#4a4a4a;"></div>
<svg style="left:174.5px;top:389.6px" width="5" height="3" viewBox="0 0 5 3"><path d="M0.5 2.6 L2.5 0.4 L4.5 2.6 Z" fill="#999"/></svg>
<div style="left:174.8px;top:395px;width:4.399999999999977px;height:1px;background:#999;"></div>
<div style="left:183px;top:389.6px;width:9.699999999999989px;height:8.299999999999955px;background:#4a4a4a;"></div>
<svg style="left:185.5px;top:392.25px" width="5" height="3" viewBox="0 0 5 3"><path d="M0 0 L5 0 L2.5 3 Z" fill="#777"/></svg>
<span class="t" style="right:501px;top:387.75px;font-size:7px;color:#e0e0e0;font-weight:400;letter-spacing:-0.2px;">66.65</span>
<span class="t" style="right:418px;top:387.75px;font-size:7px;color:#e0e0e0;font-weight:400;letter-spacing:-0.2px;">-2.85</span>
<span class="t" style="right:336.4px;top:387.75px;font-size:7px;color:#e0e0e0;font-weight:400;letter-spacing:-0.2px;">8.59</span>
<span class="t" style="right:254.39999999999998px;top:387.75px;font-size:7px;color:#e0e0e0;font-weight:400;letter-spacing:-0.2px;">26.67</span>
<span class="t" style="right:172.20000000000005px;top:387.75px;font-size:7px;color:#e0e0e0;font-weight:400;letter-spacing:-0.2px;">$97.67</span>
<span class="t" style="right:89.70000000000005px;top:387.75px;font-size:7px;color:#e0e0e0;font-weight:400;letter-spacing:-0.2px;">($240.83)</span>
<span class="t" style="right:8px;top:387.75px;font-size:7px;color:#e0e0e0;font-weight:400;letter-spacing:-0.2px;">($1,000.00)</span>
<div style="left:0px;top:398.7px;width:775px;height:13.800000000000011px;background:#464646;"></div>
<div style="left:0px;top:398.7px;width:1.5px;height:13.800000000000011px;background:#333;"></div>
<span class="t" style="left:7px;top:399.7px;font-size:7px;color:#d8d8d8;font-weight:400;letter-spacing:-0.05px;">Positions and Simulated Trades</span>
<div style="left:734px;top:398.7px;width:1px;height:13.300000000000011px;background:#545454;"></div>
<div style="left:754px;top:398.7px;width:1px;height:13.300000000000011px;background:#545454;"></div>
<svg style="left:740.8px;top:402.8px" width="7" height="6.5" viewBox="0 0 7 6.5"><path d="M0 0 L7 0 L3.5 3 Z" fill="#e8e8e8"/><path d="M0.6 2.6 L6.4 2.6 L3.5 5.8 Z" fill="#c8c8c8"/></svg>
<svg style="left:761.5px;top:402.5px" width="7" height="6" viewBox="0 0 7 6"><rect x="0" y="0" width="1" height="0.9" fill="#bbb"/><rect x="1.8" y="0" width="5" height="0.9" fill="#ddd"/><rect x="0" y="2.5" width="1" height="0.9" fill="#bbb"/><rect x="1.8" y="2.5" width="5" height="0.9" fill="#ccc"/><rect x="0" y="5" width="1" height="0.9" fill="#bbb"/><rect x="1.8" y="5" width="5" height="0.9" fill="#ddd"/></svg>
<svg style="left:771.5px;top:409px" width="3" height="3" viewBox="0 0 3 3"><path d="M3 0 L3 3 L0 3 Z" fill="#ccc"/></svg>
<div style="left:0px;top:412.5px;width:775px;height:13.0px;background:#323232;"></div>
<div style="left:0px;top:412px;width:775px;height:1px;background:#525252;"></div>
<svg style="left:4.5px;top:417.5px" width="5" height="4" viewBox="0 0 5 4"><path d="M0.5 0.8 L2.5 2.8 L4.5 0.8" stroke="#ddd" stroke-width="1.2" fill="none"/></svg>
<svg style="left:17px;top:414.5px" width="8.5" height="8.5" viewBox="0 0 8.5 8.5"><rect x="0.5" y="2" width="6.5" height="6" fill="#111" stroke="#555" stroke-width="0.8"/><path d="M1.5 4.6 L3.4 6.8 L7.6 0.9" stroke="#e8e8e8" stroke-width="1" fill="none"/></svg>
<span class="t" style="left:29px;top:413.8px;font-size:7px;color:#e0e0e0;font-weight:400;letter-spacing:0px;;transform:scaleX(0.9);transform-origin:left center">ALL</span>
<div style="left:44.5px;top:413px;width:1.0px;height:12.5px;background:#3f3f3f;"></div>
<span class="t" style="left:48px;top:413.8px;font-size:7px;color:#d8d8d8;font-weight:400;letter-spacing:-0.25px;">Show All</span>
<svg style="left:103.5px;top:422px" width="3" height="3" viewBox="0 0 3 3"><path d="M3 0 L3 3 L0 3 Z" fill="#ccc"/></svg>
<div style="left:106.5px;top:413px;width:1.0px;height:12.5px;background:#3f3f3f;"></div>
<span class="t" style="left:113px;top:413.8px;font-size:7px;color:#d8d8d8;font-weight:400;letter-spacing:-0.3px;">&lt;no selected&gt;</span>
<svg style="left:157.5px;top:422px" width="3" height="3" viewBox="0 0 3 3"><path d="M3 0 L3 3 L0 3 Z" fill="#ccc"/></svg>
<div style="left:160.5px;top:413px;width:1.0px;height:12.5px;background:#3f3f3f;"></div>
<span class="t" style="left:164px;top:413.8px;font-size:7px;color:#d8d8d8;font-weight:400;letter-spacing:-0.25px;">Single Symbol</span>
<svg style="left:243.5px;top:422px" width="3" height="3" viewBox="0 0 3 3"><path d="M3 0 L3 3 L0 3 Z" fill="#ccc"/></svg>
<div style="left:246.5px;top:413px;width:1.0px;height:12.5px;background:#3f3f3f;"></div>
<span class="t" style="left:252px;top:413.8px;font-size:7px;color:#8f8f8f;font-weight:400;letter-spacing:-0.2px;">Model:</span>
<span class="t" style="left:275px;top:413.8px;font-size:7px;color:#eeeeee;font-weight:700;letter-spacing:-0.05px;">Bjerksund-Stensland</span>
<svg style="left:348px;top:422px" width="3" height="3" viewBox="0 0 3 3"><path d="M3 0 L3 3 L0 3 Z" fill="#ccc"/></svg>
<div style="left:351.4px;top:413px;width:1.0px;height:12.5px;background:#3f3f3f;"></div>
<span class="t" style="left:356px;top:413.8px;font-size:7px;color:#d0d0d0;font-weight:400;letter-spacing:-0.2px;">Interest:</span>
<div style="left:387px;top:414px;width:48px;height:10.5px;background:#0c0c0c;"></div>
<span class="t" style="right:356px;top:413.8px;font-size:7px;color:#e0e0e0;font-weight:400;letter-spacing:-0.2px;">1.00%</span>
<div style="left:424.6px;top:415px;width:9.699999999999989px;height:4px;background:#505050;"></div>
<div style="left:424.6px;top:420px;width:9.699999999999989px;height:3px;background:#505050;"></div>
<svg style="left:426.95000000000005px;top:415.6px" width="5" height="3" viewBox="0 0 5 3"><path d="M0.5 2.6 L2.5 0.4 L4.5 2.6 Z" fill="#9a9a9a"/></svg>
<div style="left:427.25000000000006px;top:421px;width:4.399999999999977px;height:1px;background:#9a9a9a;"></div>
<svg style="left:437px;top:414.5px" width="9" height="9" viewBox="0 0 9 9"><path d="M1.2 4 L1.2 2.2 Q1.2 0.6 2.8 0.6 Q4.4 0.6 4.4 2.2" stroke="#eee" stroke-width="1" fill="none"/><rect x="3" y="4" width="5.5" height="4.5" fill="#eee"/></svg>
<div style="left:452.1px;top:413px;width:1.0px;height:12.5px;background:#3f3f3f;"></div>
<span class="t" style="left:457.5px;top:413.8px;font-size:7px;color:#d0d0d0;font-weight:400;letter-spacing:-0.2px;">Date:</span>
<div style="left:477.7px;top:414px;width:79.50000000000006px;height:10.5px;background:#0c0c0c;"></div>
<span class="t" style="left:482px;top:413.8px;font-size:7px;color:#e0e0e0;font-weight:400;letter-spacing:-0.2px;">08/24/2017</span>
<svg style="left:532.5px;top:415.2px" width="9" height="9" viewBox="0 0 9 9"><rect x="0.9" y="1.3" width="7" height="7" rx="1.5" stroke="#5a5a5a" stroke-width="1" fill="none"/><rect x="2.2" y="0.3" width="1" height="1.6" fill="#666"/><rect x="5.6" y="0.3" width="1" height="1.6" fill="#666"/><rect x="2" y="2.4" width="4.8" height="0.8" fill="#4a4a4a"/><rect x="3" y="4" width="0.9" height="3.2" fill="#555"/><rect x="4.8" y="4.2" width="1.6" height="3" fill="#555"/></svg>
<div style="left:545.8px;top:415px;width:10.800000000000068px;height:4px;background:#505050;"></div>
<div style="left:545.8px;top:420px;width:10.800000000000068px;height:3px;background:#505050;"></div>
<svg style="left:548.7px;top:415.6px" width="5" height="3" viewBox="0 0 5 3"><path d="M0.5 2.6 L2.5 0.4 L4.5 2.6 Z" fill="#9a9a9a"/></svg>
<div style="left:549.0px;top:421px;width:4.400000000000091px;height:1px;background:#9a9a9a;"></div>
<div style="left:561.9px;top:413px;width:1.0px;height:12.5px;background:#3f3f3f;"></div>
<div style="left:0px;top:425.5px;width:775px;height:10.800000000000011px;background:#1f1f1f;"></div>
<div style="left:0px;top:425.5px;width:15px;height:10.800000000000011px;background:#4b714d;"></div>
<div style="left:15px;top:425.5px;width:1px;height:10.800000000000011px;background:#2c2c2c;"></div>
<div style="left:24.5px;top:425.5px;width:1.0px;height:10.800000000000011px;background:#2c2c2c;"></div>
<div style="left:44.5px;top:425.5px;width:1.0px;height:10.800000000000011px;background:#2c2c2c;"></div>
<div style="left:117.5px;top:425.5px;width:1.0px;height:10.800000000000011px;background:#2c2c2c;"></div>
<div style="left:170.5px;top:425.5px;width:1.0px;height:10.800000000000011px;background:#2c2c2c;"></div>
<div style="left:235.6px;top:425.5px;width:1.0px;height:10.800000000000011px;background:#2c2c2c;"></div>
<div style="left:297.2px;top:425.5px;width:1.0px;height:10.800000000000011px;background:#2c2c2c;"></div>
<div style="left:364.9px;top:425.5px;width:1.0px;height:10.800000000000011px;background:#2c2c2c;"></div>
<div style="left:417px;top:425.5px;width:1px;height:10.800000000000011px;background:#2c2c2c;"></div>
<div style="left:469px;top:425.5px;width:1px;height:10.800000000000011px;background:#2c2c2c;"></div>
<div style="left:528.6px;top:425.5px;width:1.0px;height:10.800000000000011px;background:#2c2c2c;"></div>
<div style="left:541.6px;top:425.5px;width:1.0px;height:10.800000000000011px;background:#2c2c2c;"></div>
<div style="left:594px;top:425.5px;width:1px;height:10.800000000000011px;background:#2c2c2c;"></div>
<div style="left:645.5px;top:425.5px;width:1.0px;height:10.800000000000011px;background:#2c2c2c;"></div>
<div style="left:697.5px;top:425.5px;width:1.0px;height:10.800000000000011px;background:#2c2c2c;"></div>
<div style="left:749.8px;top:425.5px;width:1.0px;height:10.800000000000011px;background:#2c2c2c;"></div>
<div style="left:759.2px;top:425.5px;width:1.0px;height:10.800000000000011px;background:#2c2c2c;"></div>
<div style="left:766.5px;top:425.5px;width:8.5px;height:63.5px;background:#0e0e0e;"></div>
<span class="t" style="left:46.5px;top:425.0px;font-size:7px;color:#a8a8a8;font-weight:400;letter-spacing:-0.2px;">Spread</span>
<span class="t" style="left:119px;top:425.0px;font-size:7px;color:#a8a8a8;font-weight:400;letter-spacing:-0.2px;">Side</span>
<span class="t" style="right:540.1px;top:425.0px;font-size:7px;color:#a8a8a8;font-weight:400;letter-spacing:-0.2px;">Qty</span>
<span class="t" style="left:237px;top:425.0px;font-size:7px;color:#a8a8a8;font-weight:400;letter-spacing:-0.2px;">Symbol</span>
<span class="t" style="right:411.3px;top:425.0px;font-size:7px;color:#a8a8a8;font-weight:400;letter-spacing:-0.2px;">Exp</span>
<span class="t" style="right:359px;top:425.0px;font-size:7px;color:#a8a8a8;font-weight:400;letter-spacing:-0.2px;">Strike</span>
<span class="t" style="left:418.4px;top:425.0px;font-size:7px;color:#a8a8a8;font-weight:400;letter-spacing:-0.2px;">Type</span>
<span class="t" style="right:248px;top:425.0px;font-size:7px;color:#a8a8a8;font-weight:400;letter-spacing:-0.2px;">Price</span>
<span class="t" style="right:182.39999999999998px;top:425.0px;font-size:7px;color:#a8a8a8;font-weight:400;letter-spacing:-0.2px;">Yield</span>
<span class="t" style="right:130.39999999999998px;top:425.0px;font-size:7px;color:#a8a8a8;font-weight:400;letter-spacing:-0.2px;">Vol</span>
<span class="t" style="right:78.5px;top:425.0px;font-size:7px;color:#a8a8a8;font-weight:400;letter-spacing:-0.2px;">Delta</span>
<span class="t" style="right:26.700000000000045px;top:425.0px;font-size:7px;color:#a8a8a8;font-weight:400;letter-spacing:-0.2px;">BP Effect</span>
<div style="left:0px;top:436.3px;width:766.5px;height:13.199999999999989px;background:#363636;"></div>
<svg style="left:4.5px;top:441.2px" width="5" height="4" viewBox="0 0 5 4"><path d="M0.5 0.8 L2.5 2.8 L4.5 0.8" stroke="#ddd" stroke-width="1.2" fill="none"/></svg>
<svg style="left:16.8px;top:438.0px" width="8.5" height="8.5" viewBox="0 0 8.5 8.5"><rect x="0.5" y="2" width="6.5" height="6" fill="#111" stroke="#555" stroke-width="0.8"/><path d="M1.5 4.6 L3.4 6.8 L7.6 0.9" stroke="#e8e8e8" stroke-width="1" fill="none"/></svg>
<span class="t" style="left:29.5px;top:436.8px;font-size:7px;color:#e0e0e0;font-weight:400;letter-spacing:0px;;transform:scaleX(0.84);transform-origin:left center">SVXY</span>
<div style="left:745.6px;top:436.3px;width:1.0px;height:13.199999999999989px;background:#2c2c2c;"></div>
<svg style="left:751px;top:438px" width="9" height="9" viewBox="0 0 9 9"><g fill="#f0f0f0"><circle cx="4.5" cy="4.5" r="2.6"/><rect x="4" y="0" width="1" height="9" transform="rotate(0 4.5 4.5)"/><rect x="4" y="0" width="1" height="9" transform="rotate(45 4.5 4.5)"/><rect x="4" y="0" width="1" height="9" transform="rotate(90 4.5 4.5)"/><rect x="4" y="0" width="1" height="9" transform="rotate(135 4.5 4.5)"/></g><circle cx="4.5" cy="4.5" r="1.2" fill="#363636"/></svg>
<div style="left:0px;top:449.5px;width:14px;height:39.5px;background:#4b714d;"></div>
<div style="left:15px;top:449.5px;width:751.5px;height:39.5px;background:#0b0b0b;"></div>
<div style="left:14px;top:449.5px;width:1px;height:39.5px;background:#d0d0d0;"></div>
<div style="left:15px;top:449.5px;width:751.5px;height:0.8000000000000114px;background:#555;"></div>
<div style="left:15px;top:459.3px;width:751.5px;height:0.8000000000000114px;background:#2a2a2a;"></div>
<div style="left:15px;top:468.6px;width:751.5px;height:0.8000000000000114px;background:#2a2a2a;"></div>
<div style="left:15px;top:478.2px;width:751.5px;height:0.8000000000000114px;background:#2a2a2a;"></div>
<div style="left:24.7px;top:449.5px;width:0.8000000000000007px;height:39.5px;background:#262626;"></div>
<div style="left:45.6px;top:449.5px;width:0.7999999999999972px;height:39.5px;background:#262626;"></div>
<div style="left:118.5px;top:449.5px;width:0.7999999999999972px;height:39.5px;background:#262626;"></div>
<div style="left:169.6px;top:449.5px;width:0.8000000000000114px;height:39.5px;background:#262626;"></div>
<div style="left:233.8px;top:449.5px;width:0.8000000000000114px;height:39.5px;background:#262626;"></div>
<div style="left:296.9px;top:449.5px;width:0.8000000000000114px;height:39.5px;background:#262626;"></div>
<div style="left:363.5px;top:449.5px;width:0.8000000000000114px;height:39.5px;background:#262626;"></div>
<div style="left:415.5px;top:449.5px;width:0.8000000000000114px;height:39.5px;background:#262626;"></div>
<div style="left:467.2px;top:449.5px;width:0.8000000000000114px;height:39.5px;background:#262626;"></div>
<div style="left:526.7px;top:449.5px;width:0.7999999999999545px;height:39.5px;background:#262626;"></div>
<div style="left:540.4px;top:449.5px;width:0.7999999999999545px;height:39.5px;background:#262626;"></div>
<div style="left:592.4px;top:449.5px;width:0.7999999999999545px;height:39.5px;background:#262626;"></div>
<div style="left:644.5px;top:449.5px;width:0.7999999999999545px;height:39.5px;background:#262626;"></div>
<div style="left:696.5px;top:449.5px;width:0.7999999999999545px;height:39.5px;background:#262626;"></div>
<div style="left:748.5px;top:449.5px;width:0.7999999999999545px;height:39.5px;background:#262626;"></div>
<div style="left:758.9px;top:449.5px;width:0.7999999999999545px;height:39.5px;background:#262626;"></div>
<div style="left:766px;top:436.3px;width:0.6000000000000227px;height:52.69999999999999px;background:#333;"></div>
<svg style="left:15.6px;top:449.8px" width="8.5" height="8.5" viewBox="0 0 8.5 8.5"><rect x="0.5" y="2" width="6.5" height="6" fill="#111" stroke="#555" stroke-width="0.8"/><path d="M1.5 4.6 L3.4 6.8 L7.6 0.9" stroke="#e8e8e8" stroke-width="1" fill="none"/></svg>
<svg style="left:31px;top:451.0px" width="8" height="7" viewBox="0 0 8 7"><path d="M0.5 6.5 L3 5 L4.5 5.5 L7.5 0.5" stroke="#333" stroke-width="0.8" fill="none"/></svg>
<span class="t" style="left:47px;top:448.59999999999997px;font-size:7px;color:#e0e0e0;font-weight:400;letter-spacing:0px;;transform:scaleX(0.85);transform-origin:left center">STK</span>
<span class="t" style="right:542.5px;top:448.59999999999997px;font-size:7px;color:#e0e0e0;font-weight:400;letter-spacing:0px;">0</span>
<span class="t" style="right:479px;top:448.59999999999997px;font-size:7px;color:#e0e0e0;font-weight:400;letter-spacing:0px;;transform:scaleX(0.84);transform-origin:right center">SVXY</span>
<span class="t" style="left:417px;top:448.59999999999997px;font-size:7px;color:#e0e0e0;font-weight:400;letter-spacing:0px;;transform:scaleX(0.9);transform-origin:left center">ETF</span>
<span class="t" style="right:249.5px;top:448.59999999999997px;font-size:7px;color:#e0e0e0;font-weight:400;letter-spacing:-0.2px;">.00</span>
<span class="t" style="right:184px;top:448.59999999999997px;font-size:7px;color:#e0e0e0;font-weight:400;letter-spacing:-0.25px;">0.00%</span>
<span class="t" style="right:132px;top:448.59999999999997px;font-size:7px;color:#e0e0e0;font-weight:400;letter-spacing:-0.25px;">78.31%</span>
<span class="t" style="right:80px;top:448.59999999999997px;font-size:7px;color:#e0e0e0;font-weight:400;letter-spacing:-0.2px;">.00</span>
<span class="t" style="right:28px;top:448.59999999999997px;font-size:7px;color:#e0e0e0;font-weight:400;letter-spacing:-0.2px;">$0.00</span>
<svg style="left:15.6px;top:459.6px" width="8.5" height="8.5" viewBox="0 0 8.5 8.5"><rect x="0.5" y="2" width="6.5" height="6" fill="#111" stroke="#555" stroke-width="0.8"/><path d="M1.5 4.6 L3.4 6.8 L7.6 0.9" stroke="#e8e8e8" stroke-width="1" fill="none"/></svg>
<svg style="left:31px;top:460.8px" width="8" height="7" viewBox="0 0 8 7"><path d="M0.5 6.5 L3 5 L4.5 5.5 L7.5 0.5" stroke="#333" stroke-width="0.8" fill="none"/></svg>
<span class="t" style="left:47px;top:458.15000000000003px;font-size:7px;color:#e0e0e0;font-weight:400;letter-spacing:0px;;transform:scaleX(0.85);transform-origin:left center">OPT</span>
<span class="t" style="left:120px;top:458.15000000000003px;font-size:7px;color:#e0e0e0;font-weight:400;letter-spacing:0px;;transform:scaleX(0.88);transform-origin:left center">SHORT</span>
<span class="t" style="right:542.5px;top:458.15000000000003px;font-size:7px;color:#e0e0e0;font-weight:400;letter-spacing:0px;">-1</span>
<span class="t" style="right:479px;top:458.15000000000003px;font-size:7px;color:#e0e0e0;font-weight:400;letter-spacing:0px;;transform:scaleX(0.84);transform-origin:right center">SVXY</span>
<span class="t" style="right:413px;top:458.15000000000003px;font-size:7px;color:#e0e0e0;font-weight:400;letter-spacing:0px;;transform:scaleX(0.9);transform-origin:right center">25 AUG 17</span>
<span class="t" style="right:361px;top:458.15000000000003px;font-size:7px;color:#e0e0e0;font-weight:400;letter-spacing:0px;">75</span>
<span class="t" style="left:417px;top:458.15000000000003px;font-size:7px;color:#e0e0e0;font-weight:400;letter-spacing:0px;;transform:scaleX(0.9);transform-origin:left center">CALL</span>
<span class="t" style="right:249.5px;top:458.15000000000003px;font-size:7px;color:#e0e0e0;font-weight:400;letter-spacing:-0.2px;">2.17</span>
<span class="t" style="right:184px;top:458.15000000000003px;font-size:7px;color:#e0e0e0;font-weight:400;letter-spacing:-0.25px;">5.32%</span>
<span class="t" style="right:132px;top:458.15000000000003px;font-size:7px;color:#e0e0e0;font-weight:400;letter-spacing:-0.25px;">69.68%</span>
<span class="t" style="right:80px;top:458.15000000000003px;font-size:7px;color:#e0e0e0;font-weight:400;letter-spacing:-0.2px;">-69.75</span>
<span class="t" style="right:28px;top:458.15000000000003px;font-size:7px;color:#e0e0e0;font-weight:400;letter-spacing:-0.2px;">-</span>
<svg style="left:15.6px;top:468.90000000000003px" width="8.5" height="8.5" viewBox="0 0 8.5 8.5"><rect x="0.5" y="2" width="6.5" height="6" fill="#111" stroke="#555" stroke-width="0.8"/><path d="M1.5 4.6 L3.4 6.8 L7.6 0.9" stroke="#e8e8e8" stroke-width="1" fill="none"/></svg>
<svg style="left:31px;top:470.1px" width="8" height="7" viewBox="0 0 8 7"><path d="M0.5 6.5 L3 5 L4.5 5.5 L7.5 0.5" stroke="#333" stroke-width="0.8" fill="none"/></svg>
<span class="t" style="left:47px;top:467.59999999999997px;font-size:7px;color:#e0e0e0;font-weight:400;letter-spacing:0px;;transform:scaleX(0.85);transform-origin:left center">OPT</span>
<span class="t" style="left:120px;top:467.59999999999997px;font-size:7px;color:#e0e0e0;font-weight:400;letter-spacing:0px;;transform:scaleX(0.88);transform-origin:left center">LONG</span>
<span class="t" style="right:542.5px;top:467.59999999999997px;font-size:7px;color:#e0e0e0;font-weight:400;letter-spacing:0px;">+1</span>
<span class="t" style="right:479px;top:467.59999999999997px;font-size:7px;color:#e0e0e0;font-weight:400;letter-spacing:0px;;transform:scaleX(0.84);transform-origin:right center">SVXY</span>
<span class="t" style="right:413px;top:467.59999999999997px;font-size:7px;color:#e0e0e0;font-weight:400;letter-spacing:0px;;transform:scaleX(0.9);transform-origin:right center">18 JAN 19</span>
<span class="t" style="right:361px;top:467.59999999999997px;font-size:7px;color:#e0e0e0;font-weight:400;letter-spacing:0px;">60</span>
<span class="t" style="left:417px;top:467.59999999999997px;font-size:7px;color:#e0e0e0;font-weight:400;letter-spacing:0px;;transform:scaleX(0.9);transform-origin:left center">PUT</span>
<span class="t" style="right:249.5px;top:467.59999999999997px;font-size:7px;color:#e0e0e0;font-weight:400;letter-spacing:-0.2px;">15.95</span>
<span class="t" style="right:184px;top:467.59999999999997px;font-size:7px;color:#e0e0e0;font-weight:400;letter-spacing:-0.25px;">0.94%</span>
<span class="t" style="right:132px;top:467.59999999999997px;font-size:7px;color:#e0e0e0;font-weight:400;letter-spacing:-0.25px;">75.87%</span>
<span class="t" style="right:80px;top:467.59999999999997px;font-size:7px;color:#e0e0e0;font-weight:400;letter-spacing:-0.2px;">-22.71</span>
<span class="t" style="right:28px;top:467.59999999999997px;font-size:7px;color:#e0e0e0;font-weight:400;letter-spacing:-0.2px;">-</span>
<svg style="left:15.6px;top:478.5px" width="8.5" height="8.5" viewBox="0 0 8.5 8.5"><rect x="0.5" y="2" width="6.5" height="6" fill="#111" stroke="#555" stroke-width="0.8"/><path d="M1.5 4.6 L3.4 6.8 L7.6 0.9" stroke="#e8e8e8" stroke-width="1" fill="none"/></svg>
<svg style="left:31px;top:479.7px" width="8" height="7" viewBox="0 0 8 7"><path d="M0.5 6.5 L3 5 L4.5 5.5 L7.5 0.5" stroke="#333" stroke-width="0.8" fill="none"/></svg>
<span class="t" style="left:47px;top:477.8px;font-size:7px;color:#e0e0e0;font-weight:400;letter-spacing:0px;;transform:scaleX(0.85);transform-origin:left center">OPT</span>
<span class="t" style="left:120px;top:477.8px;font-size:7px;color:#e0e0e0;font-weight:400;letter-spacing:0px;;transform:scaleX(0.88);transform-origin:left center">LONG</span>
<span class="t" style="right:542.5px;top:477.8px;font-size:7px;color:#e0e0e0;font-weight:400;letter-spacing:0px;">+1</span>
<span class="t" style="right:479px;top:477.8px;font-size:7px;color:#e0e0e0;font-weight:400;letter-spacing:0px;;transform:scaleX(0.84);transform-origin:right center">SVXY</span>
<span class="t" style="right:413px;top:477.8px;font-size:7px;color:#e0e0e0;font-weight:400;letter-spacing:0px;;transform:scaleX(0.9);transform-origin:right center">18 JAN 19</span>
<span class="t" style="right:361px;top:477.8px;font-size:7px;color:#e0e0e0;font-weight:400;letter-spacing:0px;">70</span>
<span class="t" style="left:417px;top:477.8px;font-size:7px;color:#e0e0e0;font-weight:400;letter-spacing:0px;;transform:scaleX(0.9);transform-origin:left center">CALL</span>
<span class="t" style="right:249.5px;top:477.8px;font-size:7px;color:#e0e0e0;font-weight:400;letter-spacing:-0.2px;">23.43</span>
<span class="t" style="right:184px;top:477.8px;font-size:7px;color:#e0e0e0;font-weight:400;letter-spacing:-0.25px;">0.94%</span>
<span class="t" style="right:132px;top:477.8px;font-size:7px;color:#e0e0e0;font-weight:400;letter-spacing:-0.25px;">71.59%</span>
<span class="t" style="right:80px;top:477.8px;font-size:7px;color:#e0e0e0;font-weight:400;letter-spacing:-0.2px;">70.58</span>
<span class="t" style="right:28px;top:477.8px;font-size:7px;color:#e0e0e0;font-weight:400;letter-spacing:-0.2px;">-</span>
<svg style="left:767px;top:437px" width="8" height="52" viewBox="0 0 8 52"><path d="M2.5 4.5 L4 3 L5.5 4.5" stroke="#aaa" stroke-width="0.8" fill="none"/><rect x="0.5" y="7" width="7.5" height="21" fill="#444"/><rect x="3" y="15.5" width="3" height="3" fill="#666"/><path d="M2.5 41 L4 39.5 L5.5 41" stroke="#aaa" stroke-width="0.8" fill="none"/><path d="M2.5 46.5 L4 48 L5.5 46.5" stroke="#aaa" stroke-width="0.8" fill="none"/></svg>
</div></body></html>
